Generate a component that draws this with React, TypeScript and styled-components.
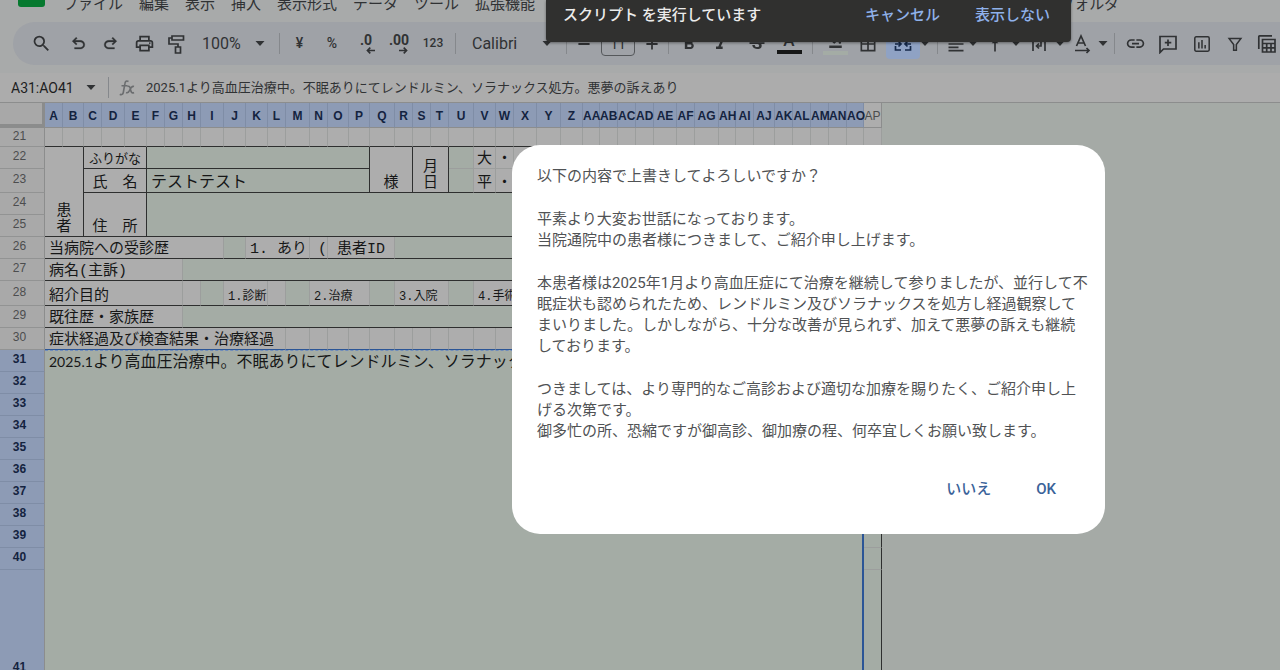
import React from "react";
import styled, { createGlobalStyle } from "styled-components";
import {
  MdSearch,
  MdOutlinePrint,
  MdFormatBold,
  MdFormatItalic,
  MdStrikethroughS,
  MdBorderAll,
  MdFormatAlignLeft,
  MdVerticalAlignTop,
  MdInsertLink,
  MdFormatColorFill,
} from "react-icons/md";

const uiFont = `Roboto, "Noto Sans CJK JP", sans-serif`;
const formFont = `"Liberation Mono", "Noto Sans CJK JP", monospace`;
const sheetFont = `Lato, "Noto Sans CJK JP", sans-serif`;

const color = {
  chrome: "#a8aaaa",
  toolbar: "#9fa2a7",
  bar: "#acacac",
  canvas: "#a5aaa6",
  cell: "#adadad",
  green: "#a4aca5",
  grid: "#9c9e9d",
  line: "#2e2f2f",
  selected: "#8d9bb5",
  selectedLine: "#7f8da6",
  blue: "#2b5596",
  ink: "#303234",
};

const GlobalStyle = createGlobalStyle`
  *, *::before, *::after { box-sizing: border-box; }
  body { margin: 0; background: ${color.canvas}; font-family: ${uiFont}; color: ${color.ink}; }
  button, input, select { font: inherit; color: inherit; border: 0; padding: 0; margin: 0; background: none; }
`;

const Page = styled.div`
  position: relative;
  display: flex;
  flex-direction: column;
  height: 100vh;
  overflow: hidden;
`;

/* ---------- top chrome ---------- */

const Chrome = styled.header`
  flex: none;
  background: ${color.chrome};
  padding: 0 0 8px;
`;

const TopRow = styled.div`
  display: flex;
  align-items: flex-start;
  height: 22px;
  padding-left: 18px;
`;

const Logo = styled.div`
  flex: none;
  width: 27px;
  height: 7px;
  background: #06792f;
  border-radius: 0 0 3px 3px;
`;

const Menu = styled.nav`
  display: flex;
  gap: 16px;
  margin: -6px 0 0 18px;
`;

const MenuButton = styled.button<{ $apart?: boolean }>`
  flex: none;
  font-size: 15px;
  line-height: 20px;
  white-space: nowrap;
  margin-left: ${(p) => (p.$apart ? "508px" : "0")};
`;

const Toolbar = styled.div`
  display: flex;
  align-items: center;
  height: 43px;
  margin-left: 13px;
  padding-left: 7px;
  background: ${color.toolbar};
  border-radius: 22px 0 0 22px;
  overflow: hidden;
`;

const Tool = styled.button<{ $w: number; $size?: number; $bold?: boolean }>`
  flex: none;
  display: flex;
  flex-direction: column;
  align-items: center;
  justify-content: center;
  width: ${(p) => p.$w}px;
  height: 30px;
  font-size: ${(p) => p.$size ?? 14}px;
  font-weight: ${(p) => (p.$bold ? 700 : 500)};
  line-height: 13px;
  svg { flex: none; }
`;

const MergeTool = styled(Tool)`
  background: #8fa2c4;
  border-radius: 4px;
  color: #16294a;
`;

const Divider = styled.span`
  flex: none;
  width: 1px;
  height: 21px;
  margin: 0 7px;
  background: #85888c;
`;

const Picker = styled.label<{ $w: number }>`
  flex: none;
  display: flex;
  align-items: center;
  justify-content: space-between;
  width: ${(p) => p.$w}px;
  padding: 0 7px 0 9px;
  font-size: 16px;
  select { appearance: none; flex: 1; min-width: 0; line-height: 20px; }
`;

const SizeBox = styled.input`
  flex: none;
  width: 34px;
  height: 24px;
  margin: 0 7px;
  border: 1px solid #55585b;
  border-radius: 4px;
  text-align: center;
  font-size: 14px;
`;

const Swatch = styled.span<{ $fill: string }>`
  width: 25px;
  height: 4px;
  margin-top: 3px;
  background: ${(p) => p.$fill};
`;

const FormulaBar = styled.div`
  flex: none;
  display: flex;
  align-items: center;
  height: 30px;
  background: ${color.bar};
  border-bottom: 1px solid #8c8d8d;
  padding-left: 11px;
`;

const NameBox = styled.input`
  width: 70px;
  font-size: 14px;
  color: #1d1e1f;
`;

const NameArrow = styled.button`
  display: flex;
  justify-content: center;
  width: 20px;
`;

const FormulaInput = styled.input`
  flex: 1;
  min-width: 0;
  margin-left: 10px;
  font-size: 13px;
  line-height: 20px;
`;

/* ---------- spreadsheet ---------- */

const SheetArea = styled.main`
  flex: 1;
  min-height: 0;
  overflow: hidden;
`;

const Sheet = styled.table`
  table-layout: fixed;
  border-collapse: separate;
  border-spacing: 0;
  width: 882px;
`;

const SheetRow = styled.tr<{ $h: number }>`
  height: ${(p) => p.$h}px;
`;

const Corner = styled.th`
  padding: 0;
  background: #a8a8a8;
  border-right: 3px solid #8b8c8c;
  border-bottom: 4px solid #8b8c8c;
`;

const ColumnHead = styled.th<{ $on: boolean }>`
  padding: 2px 0 0;
  height: 25px;
  background: ${(p) => (p.$on ? color.selected : color.cell)};
  border-right: 1px solid ${(p) => (p.$on ? color.selectedLine : "#8c8d8d")};
  border-bottom: 1px solid #8c8d8d;
  color: ${(p) => (p.$on ? "#14233f" : "#4c4d4e")};
  font: ${(p) => (p.$on ? 700 : 400)} 12px/20px "Liberation Sans", sans-serif;
  white-space: nowrap;
`;

const RowHead = styled.th<{ $on: boolean }>`
  padding: 0 5px 3px 0;
  background: ${(p) => (p.$on ? color.selected : "#a9a9a9")};
  border-right: 1px solid #8c8d8d;
  border-bottom: 1px solid ${(p) => (p.$on ? color.selectedLine : "#929393")};
  color: ${(p) => (p.$on ? "#14233f" : "#4c4d4e")};
  font: ${(p) => (p.$on ? 700 : 400)} 12px/14px "Liberation Sans", sans-serif;
  vertical-align: middle;
`;

type CellLook = {
  $green?: boolean;
  $right?: boolean;
  $bottom?: boolean;
  $align?: string;
  $size?: number;
};

const Cell = styled.td<CellLook>`
  padding: 0 0 0 ${(p) => (p.$align ? 0 : 4)}px;
  background: ${(p) => (p.$green ? color.green : color.cell)};
  border-right: 1px solid ${(p) => (p.$right ? color.line : color.grid)};
  border-bottom: 1px solid ${(p) => (p.$bottom ? color.line : color.grid)};
  color: #161717;
  font-family: ${formFont};
  font-size: ${(p) => p.$size ?? 15}px;
  line-height: 16px;
  text-align: ${(p) => p.$align ?? "left"};
  vertical-align: bottom;
  white-space: nowrap;
`;

const ValueCell = styled(Cell)`
  font-family: ${sheetFont};
  font-size: 16px;
  line-height: 22px;
`;

const HeadingCell = styled(Cell)`
  border-bottom-color: ${color.blue};
`;

const BodyCell = styled(ValueCell)`
  border-top: 1px dashed #6f8cbb;
  border-right: 2px solid ${color.blue};
  line-height: 20px;
  vertical-align: top;
`;

const Figures = styled.span`
  font-size: 14px;
`;

const EdgeCell = styled(Cell)`
  border-right-color: ${color.line};
`;

/* ---------- overlays ---------- */

const Layer = styled.div<{ $top: number }>`
  position: absolute;
  top: ${(p) => p.$top}px;
  left: 0;
  right: 0;
  display: flex;
  justify-content: center;
  padding-left: 337px;
`;

const Toast = styled.div`
  display: flex;
  align-items: flex-start;
  width: 525px;
  height: 42px;
  padding: 5px 21px 0 17px;
  background: #30302f;
  border-radius: 0 0 4px 4px;
  box-shadow: 0 1px 3px rgba(0, 0, 0, 0.4);
  color: #ececec;
  font-size: 15px;
  font-weight: 500;
  line-height: 20px;
`;

const ToastText = styled.span`
  flex: 1;
`;

const ToastButton = styled.button`
  margin-left: 35px;
  color: #8fb1ea;
`;

const Dialog = styled.section`
  display: flex;
  flex-direction: column;
  gap: 22px;
  width: 593px;
  padding: 21px 0 34px 25px;
  background: #fff;
  border-radius: 28px;
  color: #505254;
  font-size: 15px;
  line-height: 21px;
`;

const Paragraph = styled.p`
  margin: 0;
  white-space: nowrap;
`;

const Actions = styled.footer`
  display: flex;
  justify-content: flex-end;
  gap: 45px;
  padding: 14px 49px 0 0;
`;

const ActionButton = styled.button`
  color: #3a6299;
  font-weight: 500;
  line-height: 22px;
`;

/* ---------- icons ---------- */

const Caret = () => (
  <svg width="10" height="5" viewBox="0 0 10 5" aria-hidden="true">
    <path d="M0.5 0h9L5 5z" fill="currentColor" />
  </svg>
);

const Symbol = ({ d }: { d: string }) => (
  <svg width="19" height="19" viewBox="0 -960 960 960" aria-hidden="true">
    <path d={d} fill="currentColor" stroke="currentColor" strokeWidth="14" />
  </svg>
);

const Stroke = ({ children, size = 20 }: { children: React.ReactNode; size?: number }) => (
  <svg width={size} height={size} viewBox="0 0 20 20" fill="none" stroke="currentColor" strokeWidth="1.7" aria-hidden="true">
    {children}
  </svg>
);

const DecimalArrow = ({ back }: { back?: boolean }) => (
  <svg width="22" height="7" viewBox="0 0 22 7" fill="none" stroke="currentColor" strokeWidth="1.6" aria-hidden="true">
    {back ? <path d="M20 3.5H12.5M15.3 0.6L12.4 3.5l2.9 2.9" /> : <path d="M11 3.5h7.500M15.700 0.600L18.600 3.500l-2.900 2.900" />}
  </svg>
);

/* ---------- data ---------- */

const columnWidths = [
  18, 21, 18, 23, 22, 18, 18, 18, 23, 22, 22, 18, 24, 18, 21, 21, 25, 18, 18, 18, 25, 22, 18, 23, 24, 22, 17, 18, 18, 18,
  23, 18, 24, 17, 18, 21, 18, 18, 18, 18, 17, 18,
];

const columnName = (i: number) =>
  i < 26 ? String.fromCharCode(65 + i) : "A" + String.fromCharCode(65 + i - 26);

const blanks = (n: number, props: CellLook = {}) =>
  Array.from({ length: n }, (_, i) => <Cell key={i} {...props} />);

const menus = ["ファイル", "編集", "表示", "挿入", "表示形式", "データ", "ツール", "拡張機能"];

export default function App() {
  return (
    <Page>
      <GlobalStyle />
      <Chrome>
        <TopRow>
          <Logo />
          <Menu>
            {menus.map((m) => (
              <MenuButton key={m}>{m}</MenuButton>
            ))}
            <MenuButton $apart>フォルダ</MenuButton>
          </Menu>
        </TopRow>
        <Toolbar role="toolbar">
          <Tool $w={42} aria-label="検索"><MdSearch size={21} /></Tool>
          <Tool $w={32} aria-label="元に戻す">
            <Symbol d="M280-200v-80h284q63 0 109.500-40T720-420q0-60-46.500-100T564-560H312l104 104-56 56-200-200 200-200 56 56-104 104h252q97 0 166.500 63T800-420q0 94-69.500 157T564-200H280Z" />
          </Tool>
          <Tool $w={33} aria-label="やり直し">
            <Symbol d="M396-200q-97 0-166.500-63T160-420q0-94 69.500-157T396-640h252L544-744l56-56 200 200-200 200-56-56 104-104H396q-63 0-109.500 40T240-420q0 60 46.500 100T396-280h284v80H396Z" />
          </Tool>
          <Tool $w={34} aria-label="印刷"><MdOutlinePrint size={21} /></Tool>
          <Tool $w={32} aria-label="書式を貼り付け">
            <Stroke>
              <path d="M5 2h11.500v4H5zM5 4H2v6h9v3M8.500 13h5v6h-5z" />
            </Stroke>
          </Tool>
          <Picker $w={79}>
            <select aria-label="ズーム" defaultValue="100%"><option>100%</option></select>
            <Caret />
          </Picker>
          <Divider />
          <Tool $w={25}>¥</Tool>
          <Tool $w={40}>%</Tool>
          <Tool $w={28} $bold aria-label="小数点以下の桁数を減らす">.0<DecimalArrow back /></Tool>
          <Tool $w={38} $bold aria-label="小数点以下の桁数を増やす">.00<DecimalArrow /></Tool>
          <Tool $w={30} $size={12}>123</Tool>
          <Divider />
          <Picker $w={96}>
            <select aria-label="フォント" defaultValue="Calibri"><option>Calibri</option></select>
            <Caret />
          </Picker>
          <Divider />
          <Tool $w={20} aria-label="小さく"><Stroke size={16}><path d="M3 10h14" strokeWidth="2.200" /></Stroke></Tool>
          <SizeBox aria-label="フォントサイズ" defaultValue="11" />
          <Tool $w={19} aria-label="大きく"><Stroke size={16}><path d="M3 10h14M10 3v14" strokeWidth="2.200" /></Stroke></Tool>
          <Divider />
          <Tool $w={25} aria-label="太字"><MdFormatBold size={20} /></Tool>
          <Tool $w={40} aria-label="斜体"><MdFormatItalic size={20} /></Tool>
          <Tool $w={32} aria-label="取り消し線"><MdStrikethroughS size={20} /></Tool>
          <Tool $w={32} $size={17} aria-label="テキストの色">A<Swatch $fill="#161717" /></Tool>
          <Divider />
          <Tool $w={30} aria-label="塗りつぶしの色"><MdFormatColorFill size={15} /><Swatch $fill={color.green} /></Tool>
          <Tool $w={36} aria-label="枠線"><MdBorderAll size={20} /></Tool>
          <MergeTool $w={34} aria-label="セルを結合">
            <Stroke>
              <path d="M8 4H2.500v4M12 4h5.500v4M2.500 12v4H8M17.500 12v4H12M2 10h5M18 10h-5M5.500 7.500L8 10l-2.500 2.500M14.500 7.500L12 10l2.500 2.500" />
            </Stroke>
          </MergeTool>
          <Tool $w={10} aria-label="結合の種類"><Caret /></Tool>
          <Divider />
          <Tool $w={21} aria-label="水平方向の配置"><MdFormatAlignLeft size={20} /></Tool>
          <Tool $w={14} aria-label="水平方向の選択"><Caret /></Tool>
          <Tool $w={30} aria-label="垂直方向の配置"><MdVerticalAlignTop size={20} /></Tool>
          <Tool $w={12} aria-label="垂直方向の選択"><Caret /></Tool>
          <Tool $w={34} aria-label="テキストを折り返す">
            <Stroke><path d="M4 3v14M16 3v14M7 6h5v6H8M10 9.500L7.500 12l2.500 2.500" /></Stroke>
          </Tool>
          <Tool $w={8} aria-label="折り返しの選択"><Caret /></Tool>
          <Tool $w={34} aria-label="テキストの回転">
            <Stroke><path d="M5.500 12L10 2l4.500 10M7 9h6M4 16.500h14M15.500 14l2.500 2.500-2.500 2.500" /></Stroke>
          </Tool>
          <Tool $w={9} aria-label="回転の選択"><Caret /></Tool>
          <Divider />
          <Tool $w={27} aria-label="リンクを挿入"><MdInsertLink size={21} /></Tool>
          <Tool $w={38} aria-label="コメントを挿入">
            <Stroke><path d="M2 18.500V2.500h16v12.500H5.500zM10 5.500v6.500M6.800 8.700h6.500" /></Stroke>
          </Tool>
          <Tool $w={30} aria-label="グラフを挿入">
            <Stroke size={18}><rect x="2" y="2" width="16" height="16" rx="1.500" /><path d="M6.500 8v7M10 5.500V15M13.500 11v4" /></Stroke>
          </Tool>
          <Tool $w={36} aria-label="フィルタを作成">
            <Stroke size={18}><path d="M3.500 4h13L11.500 10.500V17h-3v-6.500z" /></Stroke>
          </Tool>
          <Tool $w={27} aria-label="テーブル">
            <Stroke><path d="M1.800 15V2.500Q1.800 1.800 2.500 1.800H15M5.500 5.500h12.500v12.500H5.500zM5.500 9.500H18M5.500 13.800H18M9.700 9.500V18M14 9.500V18" /></Stroke>
          </Tool>
        </Toolbar>
      </Chrome>
      <FormulaBar>
        <NameBox aria-label="名前ボックス" defaultValue="A31:AO41" />
        <NameArrow aria-label="範囲を選択"><Caret /></NameArrow>
        <Divider />
        <svg width="20" height="18" viewBox="-3 0 20 18" fill="none" stroke="#6b6d6f" strokeWidth="1.600" role="img" aria-label="数式">
          <path d="M9.500 2.500C7.500 1.300 6.300 2.300 6 4.200L4.300 13.500C4 15.300 2.600 16.200 0.800 15.200M2.500 6.800h6M8.500 7.500c2-1 2.500.5 3 3s1.300 4.200 3.500 3M15 7.500c-2-.8-3 .8-4 3s-2 4-4 3" />
        </svg>
        <FormulaInput
          aria-label="数式バー"
          defaultValue="2025.1より高血圧治療中。不眠ありにてレンドルミン、ソラナックス処方。悪夢の訴えあり"
        />
      </FormulaBar>

      <SheetArea>
        <Sheet>
          <colgroup>
            <col width={45} />
            {columnWidths.map((w, i) => (
              <col key={i} width={w} />
            ))}
          </colgroup>
          <thead>
            <SheetRow $h={25}>
              <Corner />
              {columnWidths.map((_, i) => (
                <ColumnHead key={i} $on={i < 41}>{columnName(i)}</ColumnHead>
              ))}
            </SheetRow>
          </thead>
          <tbody>
            <SheetRow $h={19}>
              <RowHead $on={false}>21</RowHead>
              {blanks(41, { $bottom: true })}
              <Cell />
            </SheetRow>
            <SheetRow $h={22}>
              <RowHead $on={false}>22</RowHead>
              <Cell colSpan={2} rowSpan={4} $right $bottom $align="center">患<br />者</Cell>
              <Cell colSpan={3} $right $bottom $align="center" $size={13}>ふりがな</Cell>
              <Cell colSpan={11} $green $right $bottom />
              <Cell colSpan={2} rowSpan={2} $right $bottom $align="center">様</Cell>
              <Cell colSpan={2} rowSpan={2} $right $bottom $align="center">月<br />日</Cell>
              <Cell $green />
              <Cell $align="center">大</Cell>
              <Cell $align="center">・</Cell>
              {blanks(18)}
              <Cell $green />
            </SheetRow>
            <SheetRow $h={24}>
              <RowHead $on={false}>23</RowHead>
              <Cell colSpan={3} $right $bottom $align="center">氏　名</Cell>
              <ValueCell colSpan={11} $green $right $bottom>テストテスト</ValueCell>
              <Cell $green $bottom />
              <Cell $bottom $align="center">平</Cell>
              <Cell $bottom $align="center">・</Cell>
              {blanks(18, { $bottom: true })}
              <Cell $green />
            </SheetRow>
            <SheetRow $h={22}>
              <RowHead $on={false}>24</RowHead>
              <Cell colSpan={3} rowSpan={2} $right $bottom $align="center">住　所</Cell>
              <Cell colSpan={36} rowSpan={2} $green $bottom />
              <Cell $green />
            </SheetRow>
            <SheetRow $h={22}>
              <RowHead $on={false}>25</RowHead>
              <Cell $green />
            </SheetRow>
            <SheetRow $h={22}>
              <RowHead $on={false}>26</RowHead>
              <Cell colSpan={9} $bottom>当病院への受診歴</Cell>
              <Cell $green $bottom />
              <Cell colSpan={3} $bottom>1. あり</Cell>
              <Cell $bottom $align="right">(</Cell>
              <Cell colSpan={3} $bottom $align="center">患者ID</Cell>
              <Cell colSpan={24} $green $bottom />
              <Cell $green />
            </SheetRow>
            <SheetRow $h={22}>
              <RowHead $on={false}>27</RowHead>
              <Cell colSpan={7} $bottom>病名(主訴)</Cell>
              <Cell colSpan={34} $green $bottom />
              <Cell $green />
            </SheetRow>
            <SheetRow $h={25}>
              <RowHead $on={false}>28</RowHead>
              <Cell colSpan={7} $bottom>紹介目的</Cell>
              <Cell $bottom />
              <Cell $green $bottom />
              <Cell colSpan={2} $bottom $size={12}>1.診断</Cell>
              <Cell $bottom />
              <Cell $green $bottom />
              <Cell colSpan={3} $bottom $size={12}>2.治療</Cell>
              <Cell $green $bottom />
              <Cell colSpan={3} $bottom $size={12}>3.入院</Cell>
              <Cell $green $bottom />
              <Cell colSpan={20} $bottom $size={12}>4.手術</Cell>
              <Cell $green />
            </SheetRow>
            <SheetRow $h={22}>
              <RowHead $on={false}>29</RowHead>
              <Cell colSpan={7} $bottom>既往歴・家族歴</Cell>
              <Cell colSpan={34} $green $bottom />
              <Cell $green />
            </SheetRow>
            <SheetRow $h={22}>
              <RowHead $on={false}>30</RowHead>
              <HeadingCell colSpan={12}>症状経過及び検査結果・治療経過</HeadingCell>
              {Array.from({ length: 29 }, (_, i) => (
                <HeadingCell key={i} />
              ))}
              <Cell $green />
            </SheetRow>
            {Array.from({ length: 11 }, (_, i) => (
              <SheetRow key={i} $h={i === 10 ? 198 : 22}>
                <RowHead $on>{31 + i}</RowHead>
                {i === 0 && (
                  <BodyCell colSpan={41} rowSpan={11} $green>
                    <Figures>2025.1</Figures>より高血圧治療中。不眠ありにてレンドルミン、ソラナックス処方。
                  </BodyCell>
                )}
                <EdgeCell $green />
              </SheetRow>
            ))}
          </tbody>
        </Sheet>
      </SheetArea>

      <Layer $top={0}>
        <Toast role="status">
          <ToastText>スクリプト を実行しています</ToastText>
          <ToastButton>キャンセル</ToastButton>
          <ToastButton>表示しない</ToastButton>
        </Toast>
      </Layer>

      <Layer $top={145}>
        <Dialog role="dialog" aria-label="確認">
          <Paragraph>以下の内容で上書きしてよろしいですか？</Paragraph>
          <Paragraph>
            平素より大変お世話になっております。<br />
            当院通院中の患者様につきまして、ご紹介申し上げます。
          </Paragraph>
          <Paragraph>
            本患者様は2025年1月より高血圧症にて治療を継続して参りましたが、並行して不<br />
            眠症状も認められたため、レンドルミン及びソラナックスを処方し経過観察して<br />
            まいりました。しかしながら、十分な改善が見られず、加えて悪夢の訴えも継続<br />
            しております。
          </Paragraph>
          <Paragraph>
            つきましては、より専門的なご高診および適切な加療を賜りたく、ご紹介申し上<br />
            げる次第です。<br />
            御多忙の所、恐縮ですが御高診、御加療の程、何卒宜しくお願い致します。
          </Paragraph>
          <Actions>
            <ActionButton>いいえ</ActionButton>
            <ActionButton>OK</ActionButton>
          </Actions>
        </Dialog>
      </Layer>
    </Page>
  );
}
